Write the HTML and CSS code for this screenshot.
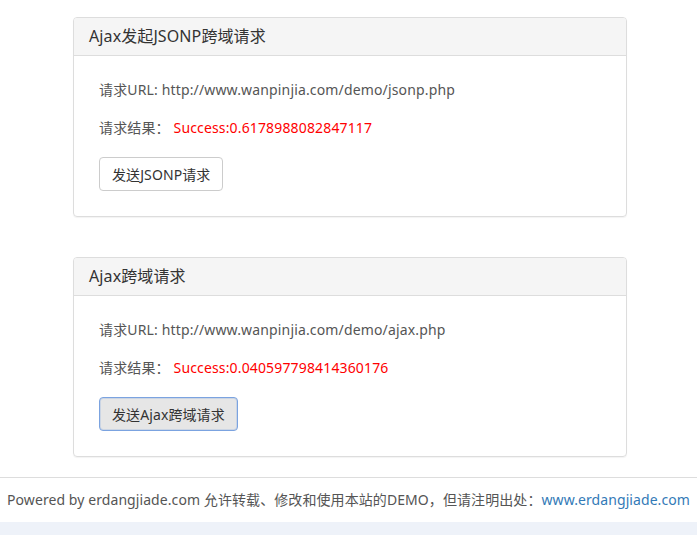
FILE: index.html
```html
<!DOCTYPE html>
<html>
<head>
<meta charset="utf-8">
<link rel="stylesheet" href="styles.css">
</head>
<body>
<div class="container">
  <div class="panel">
    <div class="panel-heading">Ajax发起JSONP跨域请求</div>
    <div class="panel-body">
      <p>请求URL: http://www.wanpinjia.com/demo/jsonp.php</p>
      <p>请求结果： <span class="result">Success:0.6178988082847117</span></p>
      <button class="btn">发送JSONP请求</button>
    </div>
  </div>
  <div class="panel">
    <div class="panel-heading">Ajax跨域请求</div>
    <div class="panel-body">
      <p>请求URL: http://www.wanpinjia.com/demo/ajax.php</p>
      <p>请求结果： <span class="result">Success:0.040597798414360176</span></p>
      <button class="btn btn-active">发送Ajax跨域请求</button>
    </div>
  </div>
</div>
<div class="footer">
  <p>Powered by erdangjiade.com 允许转载、修改和使用本站的DEMO，但请注明出处：<a href="#">www.erdangjiade.com</a></p>
</div>
<div class="band"></div>
</body>
</html>
```
FILE: styles.css
```css
html, body {
  margin: 0;
  padding: 0;
  background: #fff;
}
body {
  font-family: "Noto Sans", "Noto Sans CJK SC", sans-serif;
  font-size: 14px;
  line-height: 20px;
  color: #555;
  width: 697px;
  overflow: hidden;
}
.container {
  width: 554px;
  margin-left: 73px;
  padding-top: 17px;
}
.panel {
  border: 1px solid #ddd;
  border-radius: 4px;
  box-shadow: 0 1px 1px rgba(0,0,0,0.05);
  margin-bottom: 40px;
}
.panel + .panel {
  margin-bottom: 20px;
}
.panel-heading {
  background: #f5f5f5;
  border-bottom: 1px solid #ddd;
  border-radius: 3px 3px 0 0;
  height: 37px;
  line-height: 37px;
  padding-left: 15px;
  font-size: 16px;
  color: #333;
  letter-spacing: 0.1px;
}
.panel-body {
  padding: 24px 25px 25px;
}
.panel-body p {
  margin: 0 0 18px;
  letter-spacing: 0.15px;
}
.result {
  color: #f00;
}
.btn {
  display: block;
  margin-top: 19px;
  height: 34px;
  padding: 0 12px;
  font-family: inherit;
  font-size: 14px;
  color: #333;
  background: #fff;
  border: 1px solid #ccc;
  border-radius: 4px;
  letter-spacing: 0.1px;
}
.btn-active {
  background: #e6e6e6;
  border-color: #7ba3e0;
  box-shadow: inset 0 0 0 1px rgba(123,163,224,0.25);
}
.footer {
  border-top: 1px solid #ddd;
  height: 44px;
}
.footer p {
  margin: 0;
  line-height: 44px;
  white-space: nowrap;
  padding-left: 7px;
  color: #555;
  letter-spacing: 0.08px;
}
.footer a {
  color: #337ab7;
  text-decoration: none;
}
.band {
  height: 13px;
  background: #eef2f9;
}
```
